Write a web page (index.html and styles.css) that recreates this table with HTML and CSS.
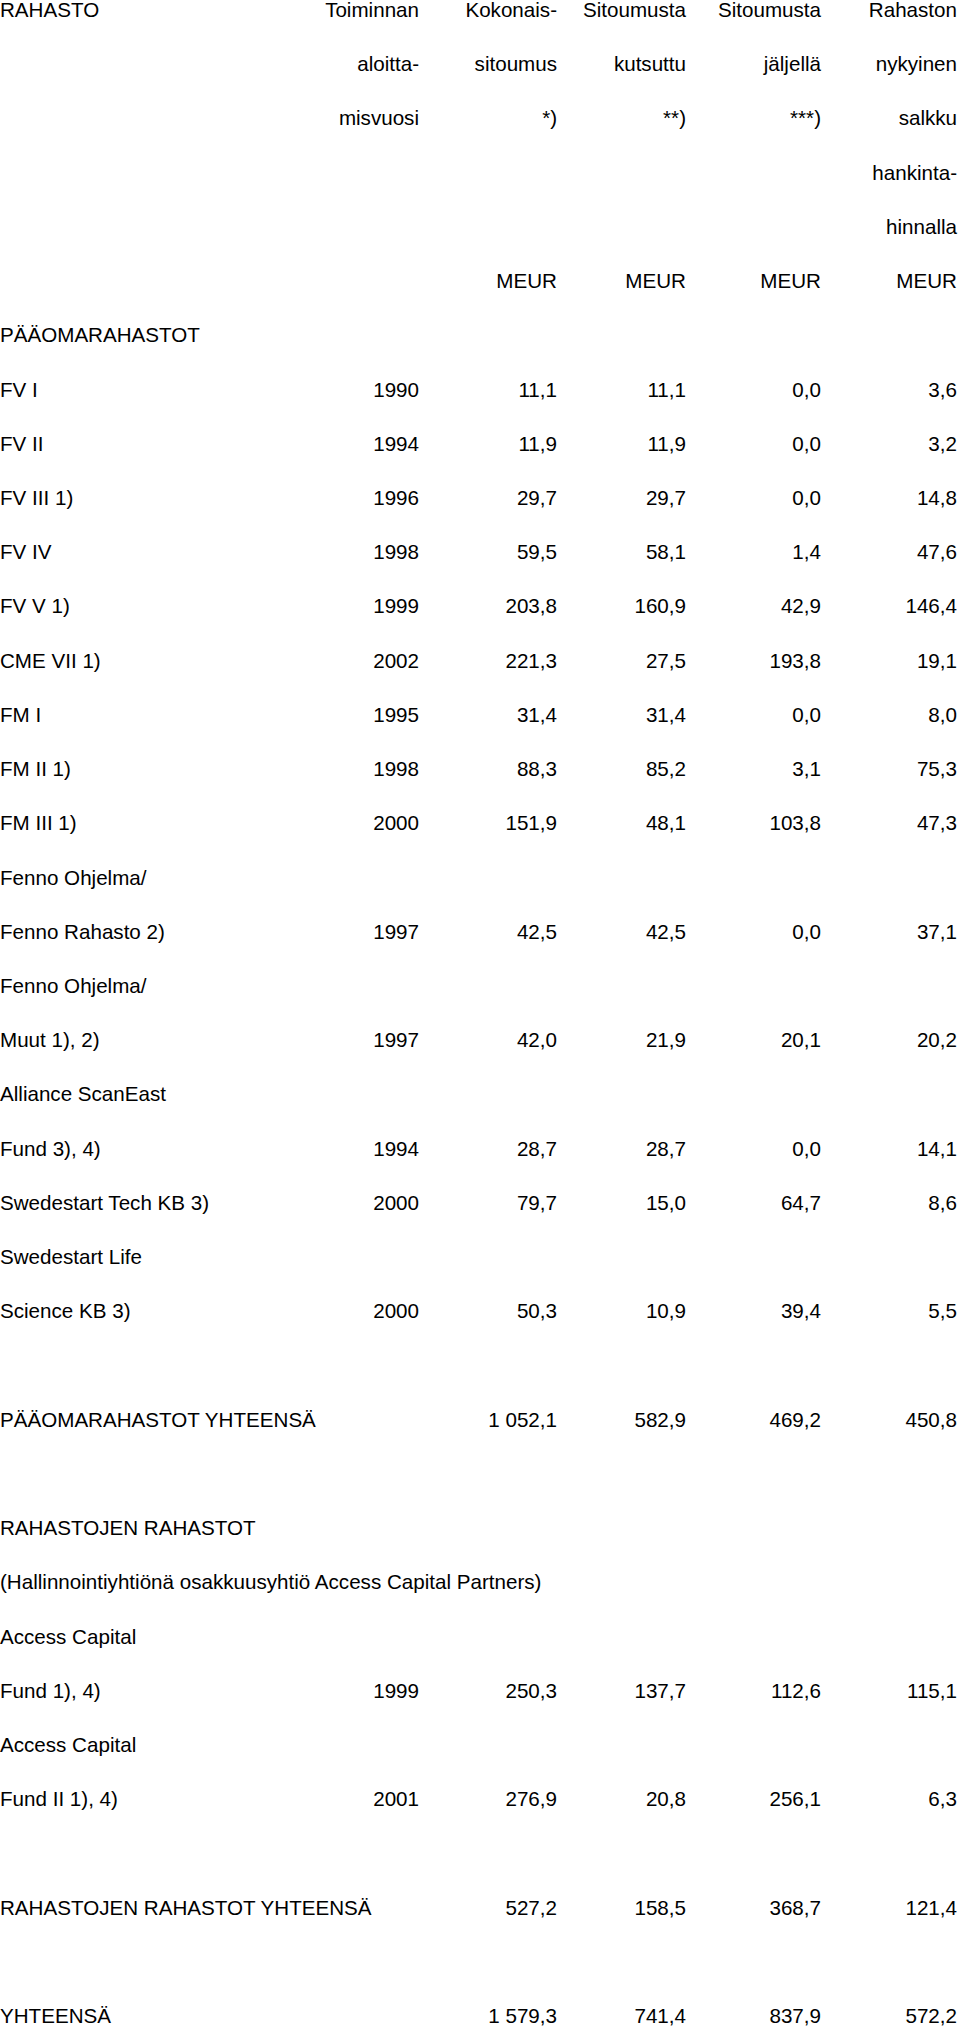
FILE: index.html
```html
<!DOCTYPE html>
<html lang="fi">
<head>
<meta charset="utf-8">
<title>Rahastot</title>
<link rel="stylesheet" href="styles.css">
</head>
<body>
<table class="funds">
  <colgroup>
    <col class="c-name">
    <col class="c-year">
    <col class="c-total">
    <col class="c-called">
    <col class="c-left">
    <col class="c-value">
  </colgroup>
  <thead>
    <tr><td class="name">RAHASTO</td><td>Toiminnan</td><td>Kokonais-</td><td>Sitoumusta</td><td>Sitoumusta</td><td>Rahaston</td></tr>
    <tr><td class="name"></td><td>aloitta-</td><td>sitoumus</td><td>kutsuttu</td><td>jäljellä</td><td>nykyinen</td></tr>
    <tr><td class="name"></td><td>misvuosi</td><td>*)</td><td>**)</td><td>***)</td><td>salkku</td></tr>
    <tr><td class="name"></td><td></td><td></td><td></td><td></td><td>hankinta-</td></tr>
    <tr><td class="name"></td><td></td><td></td><td></td><td></td><td>hinnalla</td></tr>
    <tr><td class="name"></td><td></td><td>MEUR</td><td>MEUR</td><td>MEUR</td><td>MEUR</td></tr>
  </thead>
  <tbody>
    <tr><td class="name" colspan="6">PÄÄOMARAHASTOT</td></tr>
    <tr><td class="name">FV I</td><td>1990</td><td>11,1</td><td>11,1</td><td>0,0</td><td>3,6</td></tr>
    <tr><td class="name">FV II</td><td>1994</td><td>11,9</td><td>11,9</td><td>0,0</td><td>3,2</td></tr>
    <tr><td class="name">FV III 1)</td><td>1996</td><td>29,7</td><td>29,7</td><td>0,0</td><td>14,8</td></tr>
    <tr><td class="name">FV IV</td><td>1998</td><td>59,5</td><td>58,1</td><td>1,4</td><td>47,6</td></tr>
    <tr><td class="name">FV V 1)</td><td>1999</td><td>203,8</td><td>160,9</td><td>42,9</td><td>146,4</td></tr>
    <tr><td class="name">CME VII 1)</td><td>2002</td><td>221,3</td><td>27,5</td><td>193,8</td><td>19,1</td></tr>
    <tr><td class="name">FM I</td><td>1995</td><td>31,4</td><td>31,4</td><td>0,0</td><td>8,0</td></tr>
    <tr><td class="name">FM II 1)</td><td>1998</td><td>88,3</td><td>85,2</td><td>3,1</td><td>75,3</td></tr>
    <tr><td class="name">FM III 1)</td><td>2000</td><td>151,9</td><td>48,1</td><td>103,8</td><td>47,3</td></tr>
    <tr><td class="name" colspan="6">Fenno Ohjelma/</td></tr>
    <tr><td class="name">Fenno Rahasto 2)</td><td>1997</td><td>42,5</td><td>42,5</td><td>0,0</td><td>37,1</td></tr>
    <tr><td class="name" colspan="6">Fenno Ohjelma/</td></tr>
    <tr><td class="name">Muut 1), 2)</td><td>1997</td><td>42,0</td><td>21,9</td><td>20,1</td><td>20,2</td></tr>
    <tr><td class="name" colspan="6">Alliance ScanEast</td></tr>
    <tr><td class="name">Fund 3), 4)</td><td>1994</td><td>28,7</td><td>28,7</td><td>0,0</td><td>14,1</td></tr>
    <tr><td class="name">Swedestart Tech KB 3)</td><td>2000</td><td>79,7</td><td>15,0</td><td>64,7</td><td>8,6</td></tr>
    <tr><td class="name" colspan="6">Swedestart Life</td></tr>
    <tr><td class="name">Science KB 3)</td><td>2000</td><td>50,3</td><td>10,9</td><td>39,4</td><td>5,5</td></tr>
    <tr><td class="name" colspan="6"></td></tr>
    <tr><td class="name" colspan="2">PÄÄOMARAHASTOT YHTEENSÄ</td><td>1 052,1</td><td>582,9</td><td>469,2</td><td>450,8</td></tr>
    <tr><td class="name" colspan="6"></td></tr>
    <tr><td class="name" colspan="6">RAHASTOJEN RAHASTOT</td></tr>
    <tr><td class="name" colspan="6">(Hallinnointiyhtiönä osakkuusyhtiö Access Capital Partners)</td></tr>
    <tr><td class="name" colspan="6">Access Capital</td></tr>
    <tr><td class="name">Fund 1), 4)</td><td>1999</td><td>250,3</td><td>137,7</td><td>112,6</td><td>115,1</td></tr>
    <tr><td class="name" colspan="6">Access Capital</td></tr>
    <tr><td class="name">Fund II 1), 4)</td><td>2001</td><td>276,9</td><td>20,8</td><td>256,1</td><td>6,3</td></tr>
    <tr><td class="name" colspan="6"></td></tr>
    <tr><td class="name" colspan="2">RAHASTOJEN RAHASTOT YHTEENSÄ</td><td>527,2</td><td>158,5</td><td>368,7</td><td>121,4</td></tr>
    <tr><td class="name" colspan="6"></td></tr>
    <tr><td class="name" colspan="2">YHTEENSÄ</td><td>1 579,3</td><td>741,4</td><td>837,9</td><td>572,2</td></tr>
  </tbody>
</table>
</body>
</html>
```
FILE: styles.css
```css
html, body {
  margin: 0;
  padding: 0;
  background: #ffffff;
}

body {
  font-family: "Liberation Sans", Arial, sans-serif;
  font-size: 20.6px;
  color: #000000;
}

.funds {
  table-layout: fixed;
  width: 957px;
  border-collapse: collapse;
  border-spacing: 0;
}

.c-name { width: 280px; }
.c-year { width: 139px; }
.c-total { width: 138px; }
.c-called { width: 129px; }
.c-left { width: 135px; }
.c-value { width: 136px; }

.funds tr {
  height: 54.22px;
}

.funds td {
  padding: 0;
  height: 54.22px;
  line-height: 20px;
  vertical-align: top;
  text-align: right;
  white-space: nowrap;
}

.funds td.name {
  text-align: left;
}
```
